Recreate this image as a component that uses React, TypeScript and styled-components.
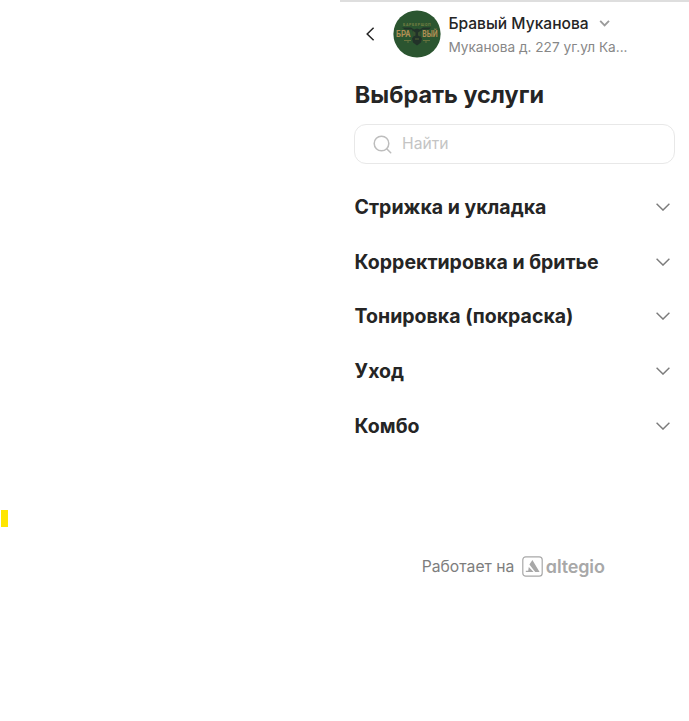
import React from "react";
import styled, { createGlobalStyle } from "styled-components";

const GlobalStyle = createGlobalStyle`
  * { box-sizing: border-box; }
  body { margin: 0; background: #fff; font-family: Inter, "Liberation Sans", sans-serif; color: #252525; }
  button { border: 0; padding: 0; margin: 0; background: none; font: inherit; color: inherit; text-align: left; }
  svg { display: block; flex: none; }
  h1, p { margin: 0; }
`;

const Page = styled.div`
  display: flex;
  height: 721px;
  overflow: hidden;
`;
const Backdrop = styled.aside`
  width: 340px;
  flex: none;
  padding: 510px 0 0 1px;
`;
const Marker = styled.div`
  width: 7px;
  height: 17px;
  background: #ffe600;
`;
const Widget = styled.main`
  flex: 1;
  min-width: 0;
  border-top: 2px solid #dedede;
  padding: 0 14px;
`;
const Header = styled.header`
  display: flex;
  height: 64px;
  align-items: center;
`;
const BackButton = styled.button`
  width: 39px;
  padding-left: 11px;
`;
const Company = styled.div`
  margin-left: 7.4px;
  padding-top: 2px;
`;
const CompanyName = styled.div`
  display: flex;
  align-items: center;
  gap: 10px;
  font-size: 15.6px;
  line-height: 23px;
  font-weight: 500;
`;
const Address = styled.p`
  padding-top: 1px;
  font-size: 13.65px;
  line-height: 23px;
  color: #878787;
  white-space: nowrap;
`;
const Title = styled.h1`
  margin: 13px 0 0 0.8px;
  font-size: 23.4px;
  line-height: 32px;
  font-weight: 700;
`;
const Search = styled.label`
  display: flex;
  align-items: center;
  gap: 10px;
  height: 40px;
  margin-top: 13px;
  padding-left: 18px;
  border: 1px solid #e8e8e8;
  border-radius: 12px;
`;
const SearchInput = styled.input`
  flex: 1;
  min-width: 0;
  border: 0;
  padding: 0 0 1px;
  outline: 0;
  background: none;
  font: 400 15.7px/24px Inter, sans-serif;
  &::placeholder { color: #c4c4c4; opacity: 1; }
`;
const Categories = styled.div`
  display: flex;
  flex-direction: column;
  margin-top: 15.6px;
`;
const Category = styled.button`
  display: flex;
  justify-content: space-between;
  align-items: center;
  height: 54.7px;
  padding: 0 5.5px 0 0.6px;
  font-size: 19.5px;
  line-height: 28px;
  font-weight: 700;
`;
const Footer = styled.footer`
  display: flex;
  align-items: center;
  justify-content: center;
  gap: 7.5px;
  margin: 101px 2.5px 0 0;
  height: 24px;
  font-size: 15.7px;
  color: #7d7d7d;
`;
const PoweredBy = styled.span`
  padding-top: 1px;
  line-height: 24px;
`;
const Brand = styled.span`
  display: flex;
  align-items: center;
  gap: 3px;
  color: #a8a8a8;
`;
const Wordmark = styled.span`
  padding-top: 1px;
  font-size: 18px;
  line-height: 22px;
  font-weight: 600;
  letter-spacing: -0.15px;
  font-feature-settings: "cv11";
`;

const Avatar = () => (
  <svg width="48" height="48" viewBox="0 0 48 48">
    <circle cx="24" cy="24" r="23.6" fill="#2b5530" />
    <path d="M9 17.5h9l3 2 3-1 3 1 3-2h8l-2 2h-7l-2 6 2 3-1 4-4 3-4-3-1-4 2-3-2-6h-7z" fill="#223229" />
    <path d="M19.5 20.5l3 2v3l-2 1zM28 20.5l-3 2v3l2 1z" fill="#38512f" />
    <path d="M22 29h4" stroke="#526036" />
    <g fill="#b08f55" fontFamily="Roboto, sans-serif" fontWeight="700">
      <text x="10" y="15.8" fontSize="3.6" letterSpacing=".7" fill="#788044">БАРБЕРШОП</text>
      <text transform="translate(3 27) scale(.87 1)" fontSize="9">БРА</text>
      <text transform="translate(29.3 27) scale(.77 1)" fontSize="9">ВЫЙ</text>
    </g>
    <path d="M11 30.5h7M14 32h2M30 30.5h7M32 32h2" stroke="#71773f" strokeWidth=".9" />
  </svg>
);

const RowChevron = () => (
  <svg width="14" height="8" viewBox="0 0 14 8" fill="none">
    <path d="M.6.7 7 7.1 13.4.7" stroke="#7c7c7c" strokeWidth="1.4" />
  </svg>
);

const categories = ["Стрижка и укладка", "Корректировка и бритье", "Тонировка (покраска)", "Уход", "Комбо"];

export default function App() {
  return (
    <>
      <GlobalStyle />
      <Page>
        <Backdrop><Marker /></Backdrop>
        <Widget>
          <Header>
            <BackButton aria-label="Назад">
              <svg width="10" height="14" viewBox="0 0 10 14" fill="none">
                <path d="M8.6.8 2.2 7l6.4 6.2" stroke="#252525" strokeWidth="1.5" />
              </svg>
            </BackButton>
            <Avatar />
            <Company>
              <CompanyName>
                Бравый Муканова
                <svg width="12" height="8" viewBox="0 0 12 8" fill="none">
                  <path d="M1.2 1.9 5.6 6.3 10 1.9" stroke="#9b9b9b" strokeWidth="1.9" />
                </svg>
              </CompanyName>
              <Address>Муканова д. 227 уг.ул Ка...</Address>
            </Company>
          </Header>
          <Title>Выбрать услуги</Title>
          <Search>
            <svg width="19" height="19" viewBox="0 0 19 19" fill="none" stroke="#bdbdbd" strokeWidth="1.5">
              <circle cx="8.5" cy="8.5" r="7.3" />
              <path d="m13.7 13.7 4 4" strokeLinecap="round" />
            </svg>
            <SearchInput placeholder="Найти" />
          </Search>
          <Categories>
            {categories.map((name) => (
              <Category key={name}>{name}<RowChevron /></Category>
            ))}
          </Categories>
          <Footer>
            <PoweredBy>Работает на</PoweredBy>
            <Brand>
              <svg width="21" height="21" viewBox="0 0 21 21">
                <rect x=".8" y=".8" width="19.4" height="19.4" rx="3" fill="none" stroke="#a8a8a8" strokeWidth="1.2" />
                <path d="M7.4 8.5 10.4 4l7.2 12h-4.4zM3.8 16v-1.2h2.4l.6-3.8 4.8 5z" fill="#a8a8a8" />
              </svg>
              <Wordmark>altegio</Wordmark>
            </Brand>
          </Footer>
        </Widget>
      </Page>
    </>
  );
}
